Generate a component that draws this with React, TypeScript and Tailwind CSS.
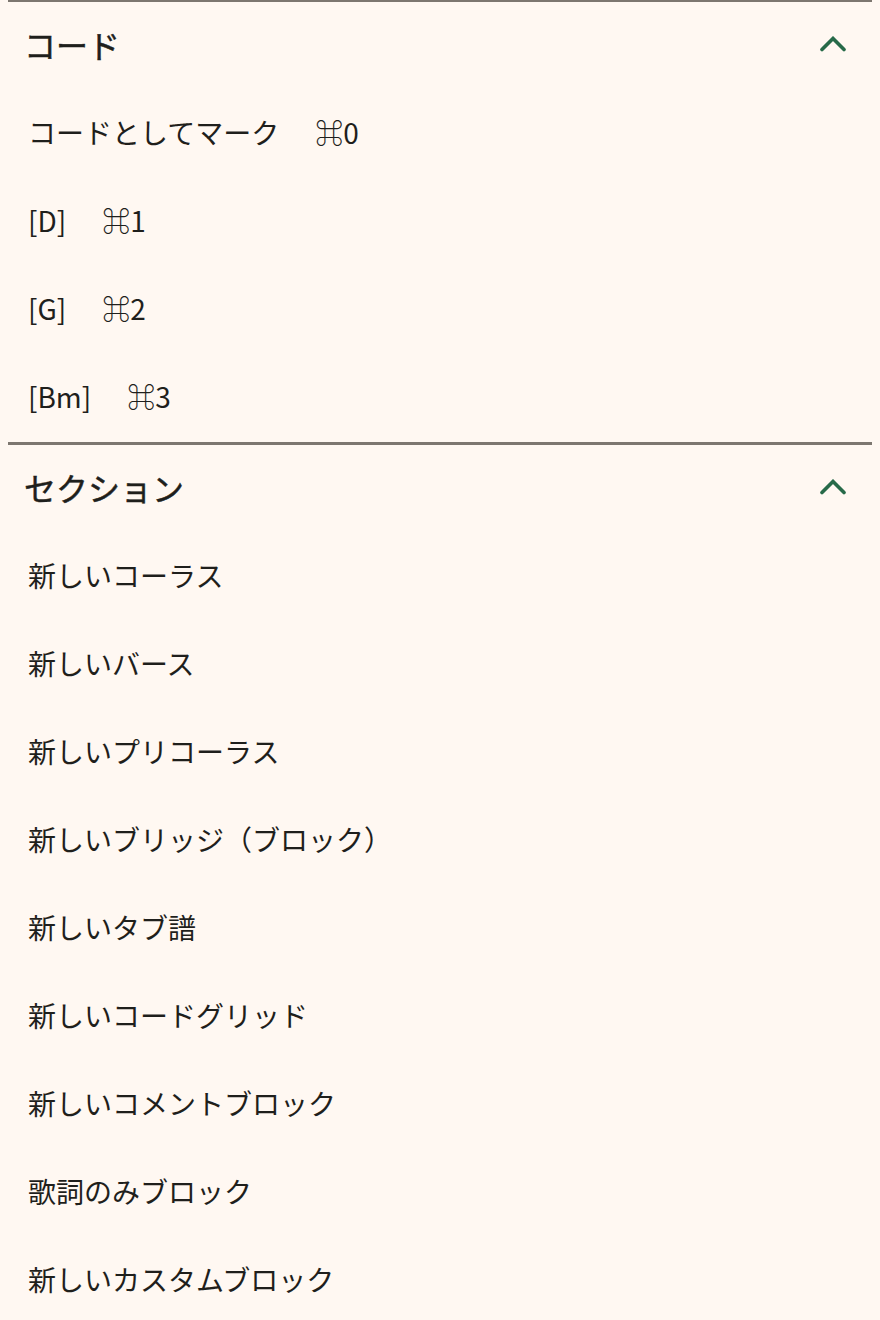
import React from 'react';

interface MenuItem {
  label: string;
  shortcut?: string;
}

interface MenuSection {
  title: string;
  items: MenuItem[];
}

const sections: MenuSection[] = [
  {
    title: 'コード',
    items: [
      { label: 'コードとしてマーク', shortcut: '⌘0' },
      { label: '[D]', shortcut: '⌘1' },
      { label: '[G]', shortcut: '⌘2' },
      { label: '[Bm]', shortcut: '⌘3' },
    ],
  },
  {
    title: 'セクション',
    items: [
      { label: '新しいコーラス' },
      { label: '新しいバース' },
      { label: '新しいプリコーラス' },
      { label: '新しいブリッジ（ブロック）' },
      { label: '新しいタブ譜' },
      { label: '新しいコードグリッド' },
      { label: '新しいコメントブロック' },
      { label: '歌詞のみブロック' },
      { label: '新しいカスタムブロック' },
    ],
  },
];

const Chevron = () => (
  <svg width="26" height="16" viewBox="0 0 26 16" fill="none" className="shrink-0">
    <polyline
      points="2,13.5 13,2.5 24,13.5"
      stroke="#276a49"
      strokeWidth="3.6"
      strokeLinecap="round"
      strokeLinejoin="miter"
    />
  </svg>
);

const Section: React.FC<{ section: MenuSection }> = ({ section }) => (
  <section className="border-t-[3px] border-[#7d7770]">
    <div className="flex h-[88px] items-center justify-between pb-1 pl-4 pr-[26px]">
      <h2 className="text-[32px] font-normal leading-none text-[#1f1f1c] [-webkit-text-stroke:0.5px_#1f1f1c]">
        {section.title}
      </h2>
      <Chevron />
    </div>
    <ul>
      {section.items.map((item) => (
        <li key={item.label} className="flex h-[88px] items-center gap-9 pb-1 pl-5 text-[28px] leading-none text-[#1f1f1c]">
          <span>{item.label}</span>
          {item.shortcut && <span>{item.shortcut}</span>}
        </li>
      ))}
    </ul>
  </section>
);

export default function App() {
  return (
    <div
      className="min-h-[1320px] w-full bg-[#fff8f2]"
      style={{ fontFamily: '"Noto Sans CJK JP", "Noto Sans", sans-serif' }}
    >
      <div className="-mt-px mx-2">
        {sections.map((s) => (
          <Section key={s.title} section={s} />
        ))}
      </div>
    </div>
  );
}
